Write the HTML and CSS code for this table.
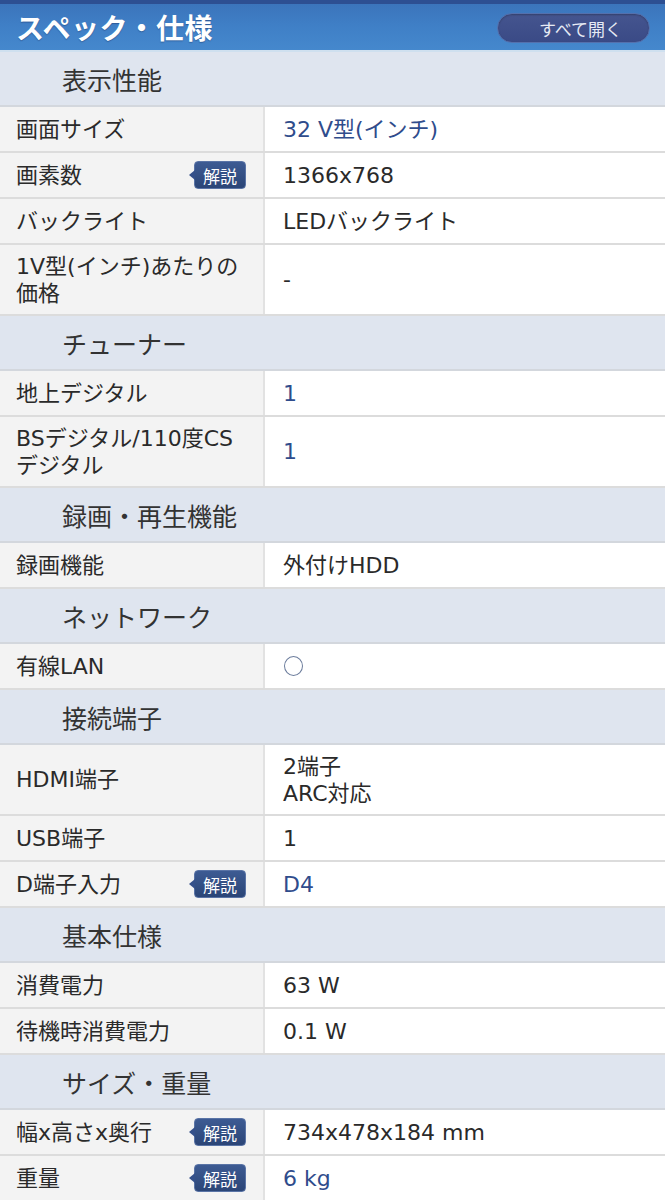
FILE: index.html
```html
<!DOCTYPE html>
<html lang="ja">
<head>
<meta charset="utf-8">
<title>スペック・仕様</title>
<link rel="stylesheet" href="styles.css">
</head>
<body>
<div class="page">
  <header class="topbar">
    <h1 class="title">スペック・仕様</h1>
    <button class="open-all">すべて開く</button>
  </header>

  <section class="group">
    <h2 class="group-title">表示性能</h2>
    <div class="row"><div class="label">画面サイズ</div><div class="value link">32 V型(インチ)</div></div>
    <div class="row"><div class="label">画素数<span class="badge">解説</span></div><div class="value">1366x768</div></div>
    <div class="row"><div class="label">バックライト</div><div class="value">LEDバックライト</div></div>
    <div class="row tall"><div class="label"><span class="lines"><span class="line">1V型(インチ)あたりの</span><span class="line">価格</span></span></div><div class="value">-</div></div>
  </section>

  <section class="group">
    <h2 class="group-title">チューナー</h2>
    <div class="row"><div class="label">地上デジタル</div><div class="value link">1</div></div>
    <div class="row tall"><div class="label"><span class="lines"><span class="line">BSデジタル/110度CS</span><span class="line">デジタル</span></span></div><div class="value link">1</div></div>
  </section>

  <section class="group">
    <h2 class="group-title">録画・再生機能</h2>
    <div class="row"><div class="label">録画機能</div><div class="value">外付けHDD</div></div>
  </section>

  <section class="group">
    <h2 class="group-title">ネットワーク</h2>
    <div class="row"><div class="label">有線LAN</div><div class="value link"><span class="circle"></span></div></div>
  </section>

  <section class="group">
    <h2 class="group-title">接続端子</h2>
    <div class="row tall"><div class="label">HDMI端子</div><div class="value"><span class="lines"><span class="line">2端子</span><span class="line">ARC対応</span></span></div></div>
    <div class="row"><div class="label">USB端子</div><div class="value">1</div></div>
    <div class="row"><div class="label">D端子入力<span class="badge">解説</span></div><div class="value link">D4</div></div>
  </section>

  <section class="group">
    <h2 class="group-title">基本仕様</h2>
    <div class="row"><div class="label">消費電力</div><div class="value">63 W</div></div>
    <div class="row"><div class="label">待機時消費電力</div><div class="value">0.1 W</div></div>
  </section>

  <section class="group">
    <h2 class="group-title">サイズ・重量</h2>
    <div class="row"><div class="label">幅x高さx奥行<span class="badge">解説</span></div><div class="value">734x478x184 mm</div></div>
    <div class="row"><div class="label">重量<span class="badge">解説</span></div><div class="value link">6 kg</div></div>
  </section>
</div>
</body>
</html>
```

FILE: styles.css
```css
* { box-sizing: border-box; }

html, body {
  margin: 0;
  padding: 0;
  background: #ffffff;
}

body {
  font-family: "DejaVu Sans", "Noto Sans CJK JP", sans-serif;
  color: #2a2a2a;
  width: 665px;
  overflow: hidden;
}

.page {
  width: 665px;
}

/* Top bar */
.topbar {
  height: 52px;
  display: flex;
  align-items: center;
  justify-content: space-between;
  padding: 0 15px 0 16px;
  background: linear-gradient(#3b74bb 0%, #3f7fc6 45%, #4588cd 100%);
  border-top: 4px solid #2d4f92;
  border-bottom: 2px solid #cfe0ef;
}

.title {
  margin: 0;
  font-family: "Noto Sans CJK JP", sans-serif;
  font-size: 28px;
  font-weight: 700;
  color: #ffffff;
  letter-spacing: 0.5px;
  line-height: 1;
  text-shadow: 0 1px 1px rgba(20, 40, 90, 0.4);
}

.open-all {
  width: 153px;
  height: 30px;
  margin-top: 2px;
  border-radius: 15px;
  border: 1px solid #5470ad;
  background: linear-gradient(#45558f, #3a4a86);
  color: #e6eaf4;
  font-family: "Noto Sans CJK JP", sans-serif;
  font-size: 17px;
  padding: 0 0 0 14px;
  line-height: 1;
  box-shadow: inset 0 1px 2px rgba(0, 0, 0, 0.25);
}

/* Groups */
.group-title {
  margin: 0;
  height: 55px;
  display: flex;
  align-items: center;
  padding-left: 62px;
  font-family: "Noto Sans CJK JP", sans-serif;
  font-size: 25px;
  font-weight: 400;
  color: #333333;
  background: #dfe5ef;
  border-bottom: 2px solid #d3d7dd;
}

.row {
  display: grid;
  grid-template-columns: 265px 1fr;
  height: 46px;
  border-bottom: 2px solid #dcdcdc;
}

.row.tall {
  height: 71px;
}

.label {
  display: flex;
  align-items: center;
  justify-content: space-between;
  padding: 0 17px 0 16px;
  background: #f3f3f3;
  border-right: 2px solid #e2e2e2;
  font-size: 22px;
  line-height: 27px;
  color: #2a2a2a;
}

.value {
  display: flex;
  align-items: center;
  padding-left: 18px;
  background: #ffffff;
  font-size: 22px;
  line-height: 27px;
  color: #2a2a2a;
}

.value.link {
  color: #2f4c8c;
}

.lines {
  display: flex;
  flex-direction: column;
  gap: 0;
}

.line {
  display: block;
  height: 27px;
  line-height: 27px;
  white-space: nowrap;
}

/* badge */
.badge {
  position: relative;
  display: inline-flex;
  align-items: center;
  justify-content: center;
  width: 52px;
  height: 28px;
  border-radius: 4px;
  background: linear-gradient(#3d5b93, #2b4577);
  border: 1px solid #5a74a6;
  color: #ffffff;
  font-family: "Noto Sans CJK JP", sans-serif;
  font-size: 17px;
  line-height: 1;
}

.badge::before {
  content: "";
  position: absolute;
  left: -6px;
  top: 50%;
  margin-top: -5px;
  border-top: 5px solid transparent;
  border-bottom: 5px solid transparent;
  border-right: 6px solid #34508a;
}

.circle {
  display: inline-block;
  width: 19px;
  height: 20px;
  border: 1.5px solid #6b7c9c;
  border-radius: 50%;
  margin-left: 1px;
}
```
